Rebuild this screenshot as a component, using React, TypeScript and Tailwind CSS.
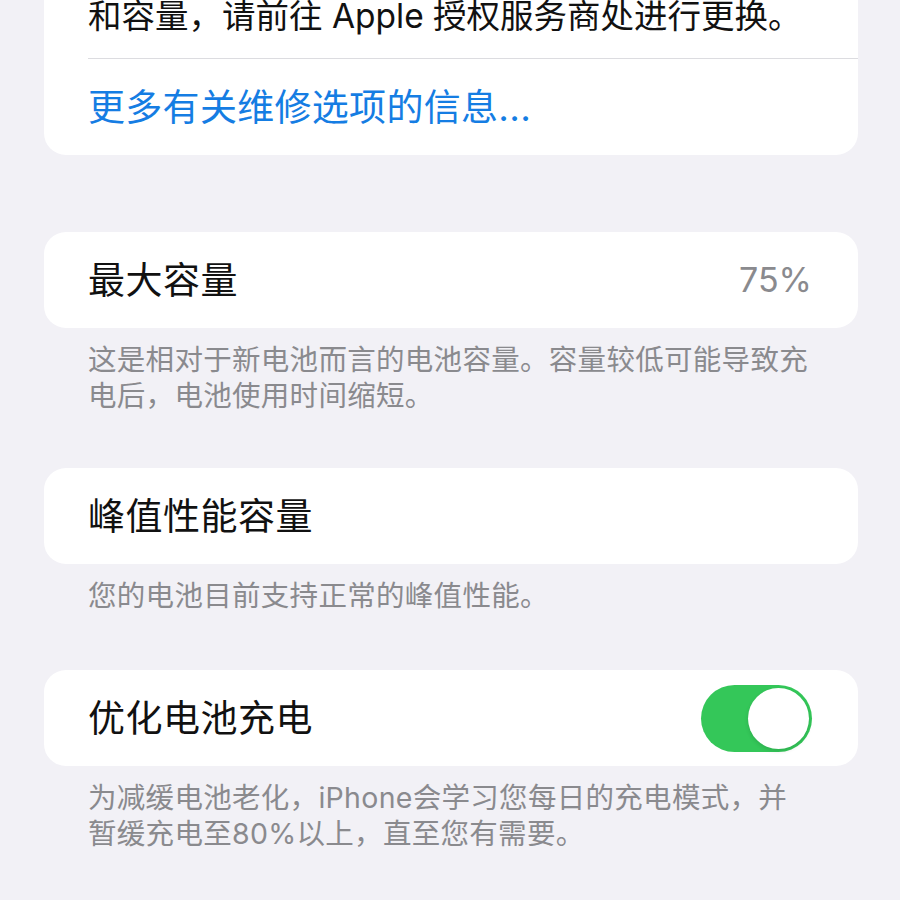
import React from "react";

const font = { fontFamily: 'Inter, "Noto Sans CJK SC", sans-serif' };

function Toggle({ on }: { on: boolean }) {
	return (
		<div className={`w-[111px] h-[67px] rounded-full p-[3px] flex items-center ${on ? "bg-[#34c759] justify-end" : "bg-[#e9e9eb] justify-start"}`}>
			<div className="w-[61px] h-[61px] rounded-full bg-white shadow-[0_2px_4px_rgba(0,0,0,0.12)]" />
		</div>
	);
}

function Row({ label, children }: { label: string; children?: React.ReactNode }) {
	return (
		<div className="h-[96px] flex items-center justify-between pl-[44px] pr-[46px]">
			<span className="text-[37px] leading-none text-[#111] tracking-[0.5px]">{label}</span>
			{children}
		</div>
	);
}

function Footer({ children }: { children: React.ReactNode }) {
	return (
		<p className="px-[44px] pt-[14px] text-[28.5px] leading-[36px] text-[#8a8a8e] tracking-[0.3px]">{children}</p>
	);
}

export default function App() {
	return (
		<div className="w-[900px] h-[900px] overflow-hidden bg-[#f2f1f6] pl-[44px] pr-[42px]" style={font}>
			<div className="bg-white rounded-b-[22px] -mt-[30px]">
				<div className="pt-[24px] pb-[20px] pl-[44px]">
					<p className="text-[33.5px] leading-[44px] text-[#111] whitespace-nowrap">
						和容量，请前往 Apple 授权服务商处进行更换。
					</p>
				</div>
				<div className="ml-[44px] h-px bg-[#dcdce0]" />
				<div className="h-[96px] flex items-center pl-[44px]">
					<span className="text-[37px] leading-none text-[#157de3] tracking-[0.3px]">更多有关维修选项的信息...</span>
				</div>
			</div>

			<div className="mt-[77px] bg-white rounded-[22px]">
				<Row label="最大容量">
					<span className="text-[34px] leading-none text-[#8a8a8e]">75%</span>
				</Row>
			</div>
			<Footer>
				这是相对于新电池而言的电池容量。容量较低可能导致充电后，电池使用时间缩短。
			</Footer>

			<div className="mt-[54px] bg-white rounded-[22px]">
				<Row label="峰值性能容量" />
			</div>
			<Footer>您的电池目前支持正常的峰值性能。</Footer>

			<div className="mt-[56px] bg-white rounded-[22px]">
				<Row label="优化电池充电">
					<Toggle on />
				</Row>
			</div>
			<Footer>
				为减缓电池老化，iPhone会学习您每日的充电模式，并暂缓充电至80%以上，直至您有需要。
			</Footer>
		</div>
	);
}
